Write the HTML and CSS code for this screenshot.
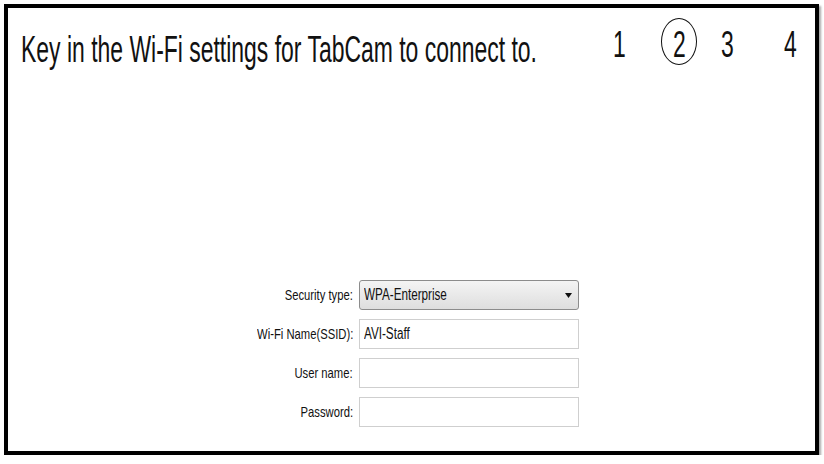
FILE: index.html
```html
<!DOCTYPE html>
<html>
<head>
<meta charset="utf-8">
<link rel="stylesheet" href="styles.css">
</head>
<body>
<div class="frame">
  <div class="header">
    <h1 class="title"><span class="narrow left">Key in the Wi-Fi settings for TabCam to connect to.</span></h1>
    <div class="steps">
      <span class="step s1"><span class="narrow">1</span></span>
      <span class="step s2 current"><span class="narrow">2</span></span>
      <span class="step s3"><span class="narrow">3</span></span>
      <span class="step s4"><span class="narrow">4</span></span>
    </div>
  </div>
  <div class="form">
    <label class="label"><span class="narrow right">Security type:</span></label>
    <div class="select">
      <span class="narrow left value">WPA-Enterprise</span>
      <svg class="arrow" width="7" height="5" viewBox="0 0 7 5"><path d="M0 0H7L3.5 5Z" fill="#111"/></svg>
    </div>
    <label class="label"><span class="narrow right">Wi-Fi Name(SSID):</span></label>
    <div class="field"><span class="narrow left value">AVI-Staff</span></div>
    <label class="label"><span class="narrow right">User name:</span></label>
    <div class="field"></div>
    <label class="label"><span class="narrow right">Password:</span></label>
    <div class="field"></div>
  </div>
</div>
</body>
</html>
```
FILE: styles.css
```css
html, body {
  margin: 0;
  padding: 0;
  background: #fff;
}
body {
  font-family: "Liberation Sans", Arial, sans-serif;
  color: #111;
}
.narrow {
  display: inline-block;
  white-space: nowrap;
  transform: scaleX(0.62);
}
.narrow.left {
  transform-origin: left center;
}
.narrow.right {
  transform-origin: right center;
}
.frame {
  box-sizing: border-box;
  margin: 4px 0 0 4px;
  width: 815px;
  height: 451px;
  border: 4px solid #000;
  box-shadow: 2px 2px 2px rgba(0,0,0,0.35);
  background: #fff;
}
.header {
  display: flex;
  align-items: flex-start;
  padding: 20px 0 0 13px;
}
.title {
  flex: none;
  width: 580px;
  margin: 0;
  font-weight: normal;
  font-size: 37px;
  line-height: 44px;
  white-space: nowrap;
}
.steps {
  display: flex;
  align-items: flex-start;
  margin-top: -5px;
  font-size: 37px;
  line-height: 44px;
}
.step {
  display: block;
  width: 36px;
  text-align: center;
}
.s2 { margin-left: 24px; }
.s3 { margin-left: 12px; }
.s4 { margin-left: 27px; }
.step.current {
  box-sizing: border-box;
  height: 47px;
  margin-top: -5px;
  padding-top: 3.5px;
  line-height: 44px;
  border: 1.5px solid #111;
  border-radius: 50%;
}
.form {
  display: grid;
  grid-template-columns: 100px 220px;
  column-gap: 6px;
  row-gap: 9px;
  margin: 208px 0 0 245px;
  font-size: 15px;
}
.label {
  display: flex;
  justify-content: flex-end;
  align-items: center;
  height: 30px;
  line-height: 30px;
  white-space: nowrap;
}
.label .narrow {
  flex: none;
  transform: scaleX(0.75);
}
.value {
  font-size: 16px;
}
.narrow.value {
  transform: scaleX(0.73);
}
.select {
  box-sizing: border-box;
  height: 30px;
  display: flex;
  align-items: center;
  justify-content: space-between;
  padding: 0 6px 0 4px;
  border: 1px solid #8c8c8c;
  border-radius: 3px;
  background: linear-gradient(#f4f4f4, #dedede);
}
.arrow {
  display: block;
}
.field {
  box-sizing: border-box;
  height: 30px;
  line-height: 28px;
  padding: 0 4px;
  border: 1px solid #cfcfcf;
  background: #fff;
}
```
